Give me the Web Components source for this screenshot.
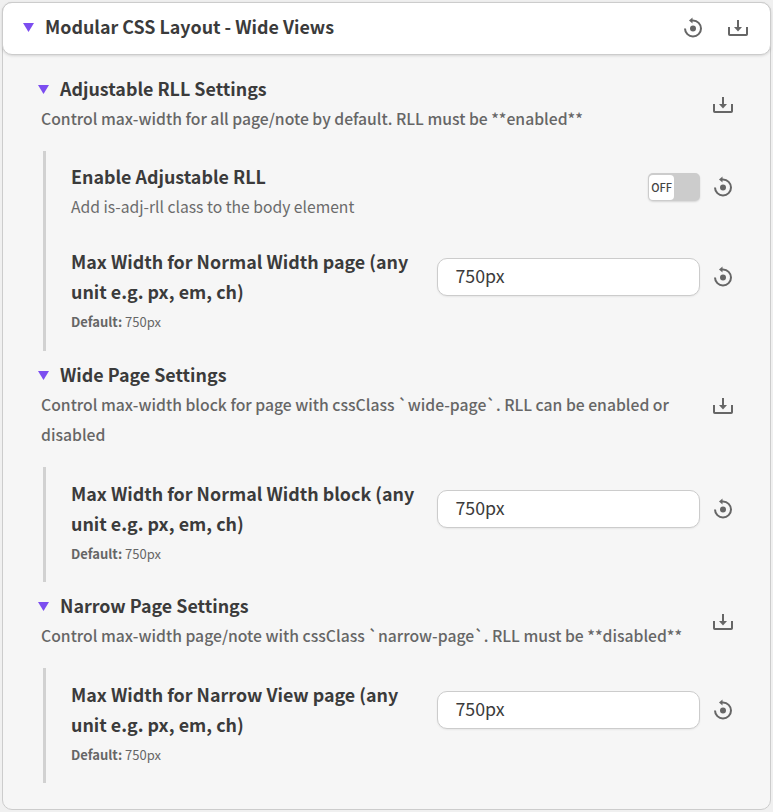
<!DOCTYPE html>
<html lang="en"><head><meta charset="utf-8"><title>Style settings</title>
<style>
html,body{margin:0;height:812px;background:#f0f0f0}
body{font-family:"Noto Sans CJK SC","Noto Sans",sans-serif;color:#3b3b3b;box-sizing:border-box;padding:2px 2px 2px;overflow:hidden}
</style></head><body>
<settings-card heading="Modular CSS Layout - Wide Views">
  <settings-section style="--end:14px;--gap:9px" heading="Adjustable RLL Settings" note="Control max-width for all page/note by default. RLL must be **enabled**">
    <toggle-row label="Enable Adjustable RLL" note="Add is-adj-rll class to the body element"></toggle-row>
    <text-row label="Max Width for Normal Width page (any unit e.g. px, em, ch)" value="750px"></text-row>
  </settings-section>
  <settings-section style="--end:13px;--gap:9px" heading="Wide Page Settings" note="Control max-width block for page with cssClass `wide-page`. RLL can be enabled or disabled">
    <text-row label="Max Width for Normal Width block (any unit e.g. px, em, ch)" value="750px"></text-row>
  </settings-section>
  <settings-section style="--end:13px" heading="Narrow Page Settings" note="Control max-width page/note with cssClass `narrow-page`. RLL must be **disabled**">
    <text-row label="Max Width for Narrow View page (any unit e.g. px, em, ch)" value="750px"></text-row>
  </settings-section>
</settings-card>
<script>
const attr=(el,n)=>el.getAttribute(n)||'';
function define(name,render){
  customElements.define(name,class extends HTMLElement{
    connectedCallback(){ if(!this.shadowRoot) this.attachShadow({mode:'open'}).innerHTML=render(this); }
  });
}
const title='.title{font-size:17.87px;line-height:30px;font-weight:700;color:#3b3b3b;margin-top:-1px;margin-bottom:1px}';
define('reset-icon',()=>`<style>:host{display:block;width:24px;height:24px;color:#666}svg{display:block}</style>
<svg width="24" height="24" viewBox="0 0 24 24" fill="none" stroke="currentColor" stroke-width="2"><path d="M4 12.5A8 8 0 1 0 12 4.5H10.5"/><path d="M11.5 1.6V7.4L8 4.5Z" fill="currentColor" stroke="none"/><circle cx="12" cy="12.5" r="3" fill="currentColor" stroke="none"/></svg>`);
define('download-icon',()=>`<style>:host{display:block;width:24px;height:24px;color:#666}svg{display:block}</style>
<svg width="24" height="24" viewBox="0 0 24 24" fill="none" stroke="currentColor" stroke-width="2"><path d="M3 11V18.2Q3 19 3.8 19H20.2Q21 19 21 18.2V11M12 4V12"/><path d="M8 11H16L12 15.5Z" fill="currentColor" stroke="none"/></svg>`);
define('fold-mark',()=>`<style>:host{display:block;width:11px;height:9px}svg{display:block}</style>
<svg width="11" height="9" viewBox="0 0 11 9"><path d="M0 0H11L5.5 9Z" fill="#7c4df0"/></svg>`);
define('settings-card',e=>`<style>:host{display:block;box-sizing:border-box;height:808px;width:769px;border:1px solid #ccc;border-radius:10px;background:#f6f6f6}
header{display:flex;align-items:center;box-sizing:border-box;height:53px;margin:-1px;padding:0 20px 2px 20px;background:#fff;border:1px solid #ccc;border-radius:10px;box-shadow:0 1px 3px #0002}
.title{flex:1;margin-left:11px}download-icon{margin-left:21px}main{padding:20px 35px 0}${title}header .title{margin-top:-3px;margin-bottom:0}</style>
<header><fold-mark></fold-mark><div class="title">${attr(e,'heading')}</div><reset-icon></reset-icon><download-icon></download-icon></header><main><slot></slot></main>`);
define('settings-section',e=>`<style>:host{display:block;margin-bottom:var(--gap,9px)}
.head{display:flex;align-items:center}.copy{width:650px}.head download-icon{margin:2px 0 0 auto}
.line{display:flex;align-items:center}.title{margin-left:11px}
.note{font-size:15.72px;line-height:30px;font-weight:500;color:#666;padding-left:3px}
.group{margin:17px 0 0 5px;border-left:3px solid #d1d1d1;padding:12px 0 var(--end,12px) 25px}${title}</style>
<div class="head"><div class="copy"><div class="line"><fold-mark></fold-mark><div class="title">${attr(e,'heading')}</div></div><div class="note">${attr(e,'note')}</div></div><download-icon></download-icon></div><div class="group"><slot></slot></div>`);
define('toggle-row',e=>`<style>:host{display:flex;align-items:flex-start;margin:-1px 0 25px}
.copy{flex:1}.note{font-size:15.68px;line-height:30px;color:#6b6b6b}
.switch{width:52px;height:28px;margin-top:11px;border-radius:5px;background:#ccc;box-sizing:border-box;padding:2px 1px;box-shadow:0 1px 2px #0002}
.knob{width:25px;height:25px;border-radius:4px;background:#fff;font-size:11px;font-weight:500;line-height:25px;text-align:center;color:#444}
reset-icon{margin:13px 0 0 11px}${title}</style>
<div class="copy"><div class="title">${attr(e,'label')}</div><div class="note">${attr(e,'note')}</div></div><div class="switch"><div class="knob">OFF</div></div><reset-icon></reset-icon>`);
define('text-row',e=>`<style>:host{display:flex;align-items:flex-start}
.copy{width:350px;margin-right:16px}.default{font-size:13px;line-height:30px;color:#666}.default b{font-weight:700}
.field{box-sizing:border-box;width:263px;height:37.5px;margin-top:11px;border:1px solid #ccc;border-radius:10px;background:#fff;padding-left:17.5px;font-size:17.8px;line-height:32px;box-shadow:0 1px 2px #0001}
reset-icon{margin:18px 0 0 11px}${title}</style>
<div class="copy"><div class="title">${attr(e,'label')}</div><div class="default"><b>Default:</b> ${attr(e,'value')}</div></div><div class="field">${attr(e,'value')}</div><reset-icon></reset-icon>`);
</script></body></html>
